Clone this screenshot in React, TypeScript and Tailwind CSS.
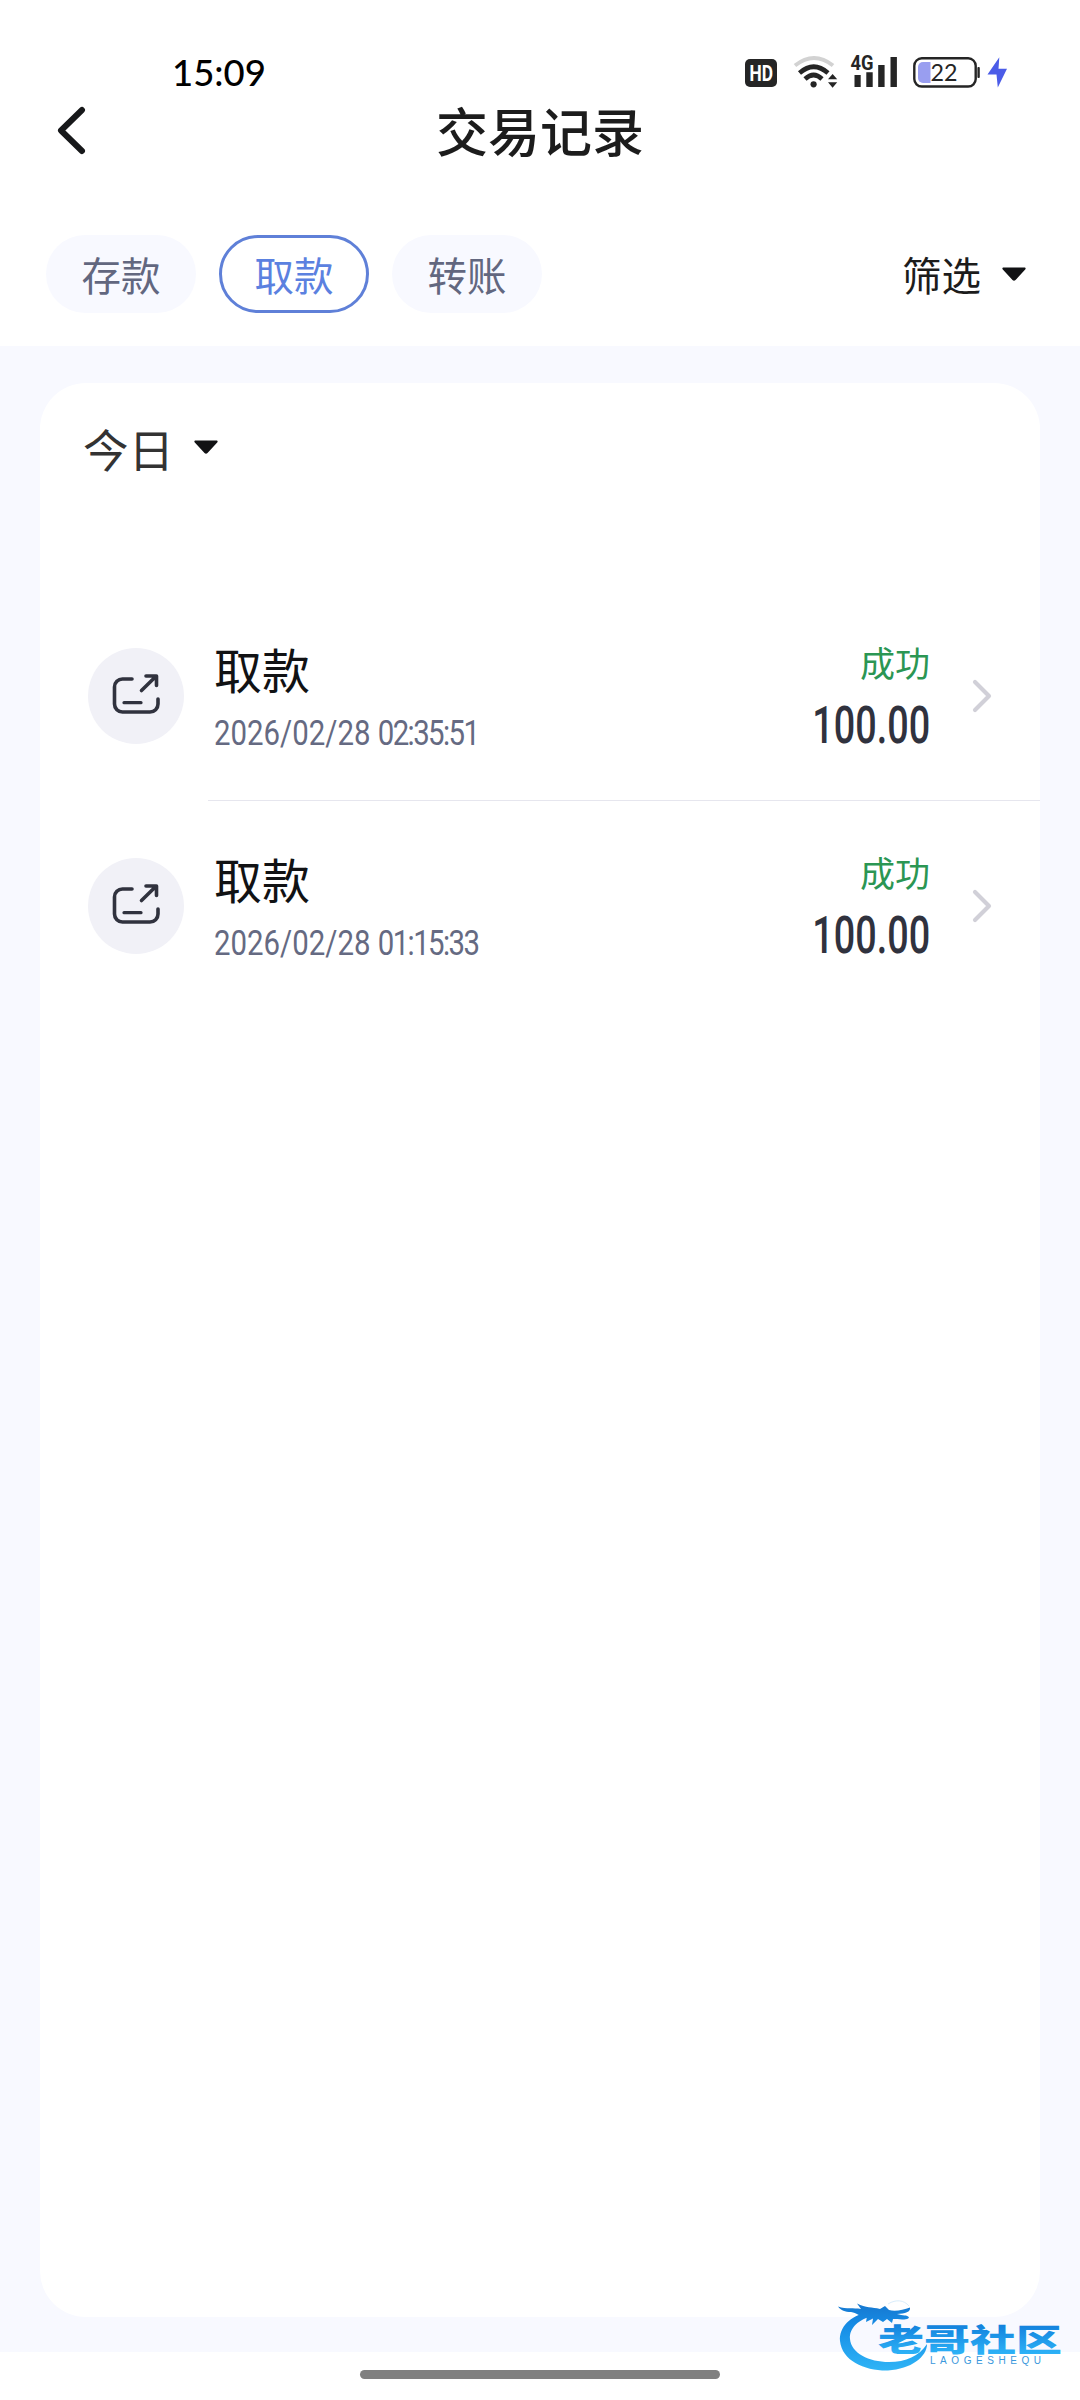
import React from "react";

type TransactionProps = {
  title: string;
  date: string;
  time: string;
  status: string;
  amount: string;
};

type TabProps = {
  label: string;
  active?: boolean;
};

const transactions: TransactionProps[] = [
  {
    title: "取款",
    date: "2026/02/28",
    time: "02:35:51",
    status: "成功",
    amount: "100.00",
  },
  {
    title: "取款",
    date: "2026/02/28",
    time: "01:15:33",
    status: "成功",
    amount: "100.00",
  },
];

const StatusIcons: React.FC = () => (
  <svg width="270" height="40" viewBox="745 52 270 40" fill="none">
    <rect x="745" y="59" width="32" height="28" rx="5" fill="#252525" />
    <text
      x="749.5"
      y="80.8"
      fontSize="22"
      fontWeight="700"
      fill="#fff"
      textLength="23.5"
      lengthAdjust="spacingAndGlyphs"
      fontFamily="Roboto, sans-serif"
    >
      HD
    </text>

    <path d="M795 65.5Q814 50.5 833 65.5" stroke="#d2d2d2" strokeWidth="4" />
    <path d="M799.5 73Q813.7 60.5 828 73" stroke="#252525" strokeWidth="4.6" />
    <path d="M805 79Q813.7 71 822 79" stroke="#252525" strokeWidth="4.6" />
    <circle cx="813.6" cy="84.3" r="3.1" fill="#252525" />
    <path d="M828 79.2h9.2l-4.6-5.2zM828 82.3h9.2l-4.6 5.4z" fill="#252525" />

    <text
      x="850.5"
      y="70.3"
      fontSize="21"
      fontWeight="700"
      fill="#252525"
      textLength="23"
      lengthAdjust="spacingAndGlyphs"
      fontFamily="Roboto, sans-serif"
    >
      4G
    </text>
    <path
      d="M854.5 75h6.200v12h-6.200zM866.3 72.3h6.400V87h-6.400zM878.2 65h6.400v22h-6.400zM890.5 57h6.400v30h-6.400z"
      fill="#252525"
    />

    <rect
      x="914.3"
      y="58.3"
      width="61.4"
      height="28.2"
      rx="7.5"
      stroke="#252525"
      strokeWidth="2.4"
    />
    <path d="M930.5 62v21H923a5 5 0 0 1-5-5V67a5 5 0 0 1 5-5z" fill="#999ef0" />
    <rect x="977.4" y="67" width="2.4" height="11" rx="1" fill="#252525" />
    <text
      x="930.5"
      y="80.8"
      fontSize="23"
      fill="#252525"
      textLength="27"
      lengthAdjust="spacingAndGlyphs"
      fontFamily="Lato, sans-serif"
    >
      22
    </text>
    <path
      d="M999.3 57.3L987.5 74.6H996.5L997.8 87.5L1007 68.8H998.5z"
      fill="#4b5ce8"
    />
  </svg>
);

const CaretDown: React.FC = () => (
  <svg width="24" height="14" viewBox="0 0 24 14">
    <path
      d="M1.6.4h20.8c1.2 0 1.7 1.3.8 2.2L13.500 13.100a2.100 2.100 0 0 1-3 0L.8 2.600C-.1 1.700.4.4 1.600.4z"
      fill="#111214"
    />
  </svg>
);

const WithdrawIcon: React.FC = () => (
  <svg
    className="overflow-visible"
    width="48"
    height="42"
    viewBox="0 0 48 42"
    fill="none"
    stroke="#30323e"
    strokeWidth="3.6"
    strokeLinecap="round"
    strokeLinejoin="round"
  >
    <path d="M20 4H10.500a8 8 0 0 0-8 8v17a8 8 0 0 0 8 8h27.500a8 8 0 0 0 8-8V24" />
    <path d="M12 27.700H29" strokeWidth="3.2" />
    <path d="M29.500 15.500L43.800 1.500M34 1h10.500v9.500" />
  </svg>
);

const Tab: React.FC<TabProps> = ({ label, active }) => (
  <button
    className={`flex h-[78px] w-[150px] items-center justify-center rounded-full text-[39.5px] leading-none ${
      active
        ? "border-[3px] border-[#5f80d8] text-[#5b81e0]"
        : "bg-[#f8f9ff] text-[#62677f]"
    }`}
  >
    {label}
  </button>
);

const TransactionRow: React.FC<TransactionProps> = ({
  title,
  date,
  time,
  status,
  amount,
}) => (
  <div className="flex h-[210px] pl-12">
    <div className="mt-[57px] flex size-24 shrink-0 items-center justify-center rounded-full bg-[#f1f1f7]">
      <WithdrawIcon />
    </div>
    <div className="ml-6 flex flex-1 border-b border-[#e6e6ee]">
      <div className="ml-[6px] mt-[51px] flex-1">
        <div className="text-[48px] leading-[52px] text-[#111214]">{title}</div>
        <div className="mt-[20px] w-max origin-left scale-x-[0.84] whitespace-pre font-[Roboto] text-[35px] leading-[40px] text-[#656a82]">
          {date} <span className="tracking-[-1.9px]">{time}</span>
        </div>
      </div>
      <div className="mt-[51px] flex flex-col items-end">
        <div className="text-[35px] leading-[40px] text-[#2b9653]">
          {status}
        </div>
        <div className="mt-[19px] w-max origin-right scale-x-[0.74] font-[Roboto] text-[51px] font-medium leading-[50px] text-[#30323e]">
          {amount}
        </div>
      </div>
      <svg
        className="ml-[42px] mr-12 mt-[88px]"
        width="20"
        height="34"
        viewBox="0 0 20 34"
        fill="none"
        stroke="#d1d0d8"
        strokeWidth="4.2"
        strokeLinecap="round"
        strokeLinejoin="round"
      >
        <path d="M3 3l14 14L3 31" />
      </svg>
    </div>
  </div>
);

const Watermark: React.FC = () => (
  <svg
    className="absolute left-[830px] top-[2294px]"
    width="240"
    height="84"
    viewBox="830 2294 240 84"
  >
    <defs>
      <linearGradient
        id="wave"
        gradientUnits="userSpaceOnUse"
        x1="0"
        y1="2303"
        x2="0"
        y2="2370"
      >
        <stop offset="0" stopColor="#1677cf" />
        <stop offset="0.35" stopColor="#168de6" />
        <stop offset="1" stopColor="#2fb4f6" />
      </linearGradient>
      <linearGradient
        id="label"
        gradientUnits="userSpaceOnUse"
        x1="0"
        y1="2324"
        x2="0"
        y2="2354"
      >
        <stop offset="0" stopColor="#1280dc" />
        <stop offset="1" stopColor="#2db2f7" />
      </linearGradient>
    </defs>
    <path
      d="M868 2312C850 2316 839 2327 840 2341C842 2361 865 2371 888 2370.500C911 2369 927 2357 927 2344C919 2356 906 2362 889 2362C869 2362 851 2353 850 2339C849 2328 859 2319 873 2316z"
      fill="url(#wave)"
    />
    <path
      d="M838 2306.500C847 2309.500 853 2307.500 861 2309L857 2303.500C866 2308 872 2307 880 2309L885 2306L889 2310C895 2312 903 2310 910 2307.500C911 2312 905 2313.500 897 2314C903 2316 907 2314.500 909 2317.500C907 2321 900 2318.500 893 2319L892 2323L887 2319L883 2322L878 2319L872 2325L873 2318.500L866 2322L867 2316C860 2318 858 2313 851 2312C845 2312 841 2310.500 838 2306.500z"
      fill="url(#wave)"
    />
    <path
      d="M888 2304C896 2299 904 2300 909 2306"
      fill="none"
      stroke="#d9edfb"
      strokeWidth="1"
    />
    <text
      x="878"
      y="2350.500"
      fontSize="31"
      fontWeight="900"
      fill="url(#label)"
      fontFamily="'Noto Sans CJK SC', sans-serif"
      textLength="184"
      lengthAdjust="spacingAndGlyphs"
    >
      老哥社区
    </text>
    <text
      x="930"
      y="2364"
      fontSize="10"
      fill="#3a98dc"
      textLength="111"
      fontFamily="'Liberation Sans', sans-serif"
    >
      LAOGESHEQU
    </text>
  </svg>
);

const App: React.FC = () => {
  return (
    <div className="relative flex h-[2400px] w-[1080px] flex-col overflow-hidden bg-white font-['Noto_Sans_CJK_SC',sans-serif]">
      <header className="h-[346px]">
        <div className="flex h-[92px] items-end justify-between pl-[172px] pr-[65px]">
          <span className="mb-[-2px] font-[Lato] text-[36.5px] font-medium leading-[44px] text-black">
            15:09
          </span>
          <StatusIcons />
        </div>
        <div className="flex h-[78px] items-center px-14">
          <svg
            width="32"
            height="50"
            viewBox="0 0 32 50"
            fill="none"
            stroke="#17181a"
            strokeWidth="6"
            strokeLinecap="round"
            strokeLinejoin="round"
          >
            <path d="M26 4L5 24.500L26 45" />
          </svg>
          <h1 className="flex-1 pb-[2px] text-center text-[52px] font-medium leading-[60px] text-[#1c1c1c]">
            交易记录
          </h1>
          <div className="w-8" />
        </div>
        <div className="mt-[65px] flex items-center pl-[46px] pr-[54px]">
          <div className="flex gap-[23px]">
            <Tab label="存款" />
            <Tab label="取款" active />
            <Tab label="转账" />
          </div>
          <div className="ml-auto flex items-center gap-[21px] text-[39.5px] leading-none text-[#1c1c1c]">
            筛选
            <CaretDown />
          </div>
        </div>
      </header>

      <main className="flex h-[2006px] flex-col bg-[#f8f9ff] px-10 pb-[35px] pt-[37px]">
        <section className="flex-1 rounded-[46px] bg-white">
          <div className="flex h-[208px] items-start gap-[20px] pl-[43px] pt-[41px] text-[45.5px] leading-[48px] text-[#333]">
            今日
            <div className="pt-[16px]">
              <CaretDown />
            </div>
          </div>
          <div className="[&>*:last-child>*]:border-transparent">
            {transactions.map((transaction, idx) => (
              <TransactionRow key={idx} {...transaction} />
            ))}
          </div>
        </section>
      </main>

      <footer className="flex flex-1 justify-center pt-[18px]">
        <div className="h-[9px] w-[360px] rounded-full bg-[#808080]" />
      </footer>

      <Watermark />
    </div>
  );
};

export default App;
